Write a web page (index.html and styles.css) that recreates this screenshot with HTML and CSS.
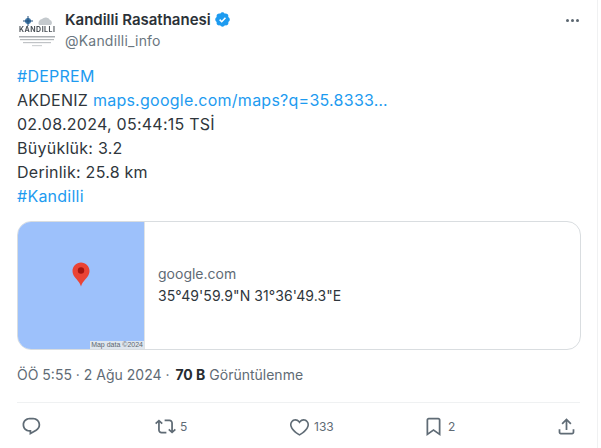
FILE: index.html
```html
<!DOCTYPE html>
<html lang="tr">
<head>
<meta charset="utf-8">
<title>Kandilli Rasathanesi</title>
<link rel="stylesheet" href="styles.css">
</head>
<body>
<main class="tweet">
  <header class="head">
    <div class="avatar">
      <svg width="40" height="40" viewBox="0 0 40 40">
        <circle cx="11" cy="8" r="3" fill="#3f78a8"/>
        <path d="M11 3v10M6 8h10" stroke="#24507c" stroke-width="1"/>
        <path d="M22 12a4 4 0 0 1 3-6 5 5 0 0 1 8 1 3 3 0 0 1 1 5z" fill="#c4c9cd"/>
        <rect x="2" y="23" width="36" height="1.500" fill="#a9adb1"/>
        <rect x="3" y="26" width="34" height="1.200" fill="#b4b8bb"/>
        <rect x="6" y="29" width="28" height="1.200" fill="#c0c3c6"/>
        <rect x="15" y="32" width="10" height="1.200" fill="#cfd2d4"/>
      </svg>
      <span class="avatar-word">KANDILLI</span>
    </div>
    <div class="who">
      <div class="name-row">
        <span class="name">Kandilli Rasathanesi</span>
        <svg class="badge" width="17" height="17" viewBox="0 0 22 22"><path fill="#1d9bf0" d="M20.400 11c0-1.300-.8-2.500-2-3.100.4-1.300.2-2.700-.8-3.600-.9-.9-2.300-1.200-3.600-.8C13.500 2.400 12.300 1.600 11 1.600S8.500 2.400 7.900 3.500c-1.300-.4-2.700-.1-3.600.8s-1.200 2.300-.8 3.600C2.400 8.500 1.600 9.700 1.600 11s.8 2.500 1.900 3.100c-.4 1.300-.1 2.700.8 3.600s2.300 1.200 3.600.8c.6 1.100 1.800 1.900 3.100 1.900s2.500-.8 3.100-1.900c1.300.4 2.700.1 3.600-.8s1.200-2.300.8-3.600c1.200-.6 2-1.800 2-3.100z"/><path fill="none" stroke="#fff" stroke-width="2" d="M7.300 11.200l2.700 2.700 4.800-5.200"/></svg>
      </div>
      <div class="handle">@Kandilli_info</div>
    </div>
    <div class="more"><i></i><i></i><i></i></div>
  </header>

  <div class="text">
    <div><a>#DEPREM</a></div>
    <div>AKDENIZ <a>maps.google.com/maps?q=35.8333…</a></div>
    <div>02.08.2024, 05:44:15 TSİ</div>
    <div>Büyüklük: 3.2</div>
    <div>Derinlik: 25.8 km</div>
    <div><a>#Kandilli</a></div>
  </div>

  <section class="card">
    <div class="map">
      <svg class="pin" width="18" height="25" viewBox="0 0 18 25">
        <path fill="#ea4335" d="M9 0.500C4.300 0.500 0.500 4.300 0.500 9c0 2.200.8 4 2 5.800 2 2.900 5 4.900 6.500 9.700 1.500-4.800 4.500-6.800 6.500-9.700 1.200-1.800 2-3.600 2-5.800C17.500 4.300 13.700 0.500 9 0.500z"/>
        <circle cx="9" cy="8.500" r="3.200" fill="#a5140f"/>
      </svg>
      <span class="map-data">Map data ©2024</span>
    </div>
    <div class="card-info">
      <div class="domain">google.com</div>
      <div class="coords">35°49'59.9"N 31°36'49.3"E</div>
    </div>
  </section>

  <div class="meta">ÖÖ 5:55 · 2 Ağu 2024 · <b>70 B</b> Görüntülenme</div>

  <nav class="actions">
    <span class="act act-reply">
      <svg width="21" height="21" viewBox="0 0 24 24"><path d="M1.750 10c0-4.420 3.580-8 8-8h4.130c4.490 0 8.120 3.640 8.120 8.130 0 2.960-1.600 5.680-4.200 7.100L9.750 21.700v-3.700h-.06C5.270 18.100 1.750 14.500 1.750 10zm8-6c-3.310 0-6 2.690-6 6 0 3.370 2.650 6.060 5.900 6l.35-.01h1.750v2.300l5.100-2.820c1.940-1.070 3.150-3.110 3.150-5.340C20 6.750 17.250 4 13.880 4z"/></svg>
    </span>
    <span class="act act-rt">
      <svg width="21" height="21" viewBox="0 0 24 24"><path d="M4.500 3.880l4.430 4.140-1.360 1.460L5.500 7.550V16c0 1.100.9 2 2 2H13v2H7.500c-2.210 0-4-1.790-4-4V7.550L1.430 9.480.07 8.020 4.500 3.880zM16.500 6H11V4h5.500c2.210 0 4 1.790 4 4v8.450l2.070-1.930 1.360 1.460-4.430 4.140-4.430-4.140 1.360-1.460 2.070 1.930V8c0-1.100-.9-2-2-2z"/></svg>
      <span>5</span>
    </span>
    <span class="act act-like">
      <svg width="21" height="21" viewBox="0 0 24 24"><path d="M16.700 5.500c-1.740-.05-3.380 1-4.360 2.830L12 8.970l-.34-.64C10.680 6.500 9.040 5.450 7.300 5.500c-1.400.04-2.600.6-3.400 1.600-.83 1-1.150 2.440-.8 3.900.8 3.300 4.500 6.700 8.900 9.500 4.400-2.800 8.100-6.200 8.900-9.500.35-1.460.03-2.900-.8-3.900-.8-1-2-1.560-3.400-1.600zM12 22.700l-.5-.3C6.600 19.400 2.300 15.600 1.300 11.400.8 9.400 1.300 7.400 2.500 5.900 3.700 4.500 5.300 3.600 7.250 3.500c1.900-.05 3.600.8 4.750 2.300 1.150-1.500 2.850-2.350 4.750-2.300 1.950.1 3.550 1 4.750 2.400 1.200 1.500 1.700 3.500 1.200 5.500-1 4.200-5.300 8-10.200 11z"/></svg>
      <span>133</span>
    </span>
    <span class="act act-save">
      <svg width="21" height="21" viewBox="0 0 24 24"><path d="M4 4.500C4 3.120 5.120 2 6.500 2h11C18.880 2 20 3.120 20 4.500v18.440l-8-5.710-8 5.710V4.500zM6.500 4c-.28 0-.5.220-.5.500v14.560l6-4.290 6 4.290V4.500c0-.28-.22-.5-.5-.5z"/></svg>
      <span>2</span>
    </span>
    <span class="act act-share">
      <svg width="21" height="21" viewBox="0 0 24 24"><path d="M12 2.590l5.700 5.700-1.410 1.420L13 6.410V16h-2V6.410l-3.300 3.300-1.410-1.420L12 2.590zM21 15l-.02 3.510c0 1.380-1.120 2.490-2.500 2.490H5.500C4.110 21 3 19.880 3 18.500V15h2v3.500c0 .28.220.5.500.5h12.980c.28 0 .5-.22.500-.5L19 15z"/></svg>
    </span>
  </nav>
</main>
</body>
</html>
```
FILE: styles.css
```css
* { box-sizing: border-box; }
html, body { margin: 0; padding: 0; }
body {
  width: 601px;
  height: 448px;
  overflow: hidden;
  background: #fff;
  color: #2a3238;
  font-family: Inter, "Open Sans", sans-serif;
}
.tweet {
  width: 598px;
  height: 448px;
  padding: 0 17px;
  border-right: 1px solid #f0f1f2;
}
.head {
  display: flex;
  align-items: flex-start;
  height: 64px;
  padding-top: 9px;
}
.avatar {
  position: relative;
  width: 40px;
  height: 40px;
  margin-top: 4px;
  flex: none;
  filter: blur(0.6px);
}
.avatar-word {
  position: absolute;
  left: 2px;
  top: 13px;
  font-size: 7px;
  line-height: 8px;
  font-weight: 700;
  color: #4a5157;
  letter-spacing: 0.5px;
}
.who { margin-left: 8px; }
.name-row { display: flex; align-items: center; gap: 3px; height: 20px; }
.name { font-size: 15px; font-weight: 600; color: #2b3137; }
.handle { font-size: 14px; line-height: 20px; margin-top: 2px; color: #6a7680; letter-spacing: 0.2px; }
.badge { display: block; }
.more { margin-left: auto; display: flex; gap: 2px; padding: 10px 1px 0 0; }
.more i { width: 3px; height: 3px; border-radius: 50%; background: #5b6670; }
.text { font-size: 16px; line-height: 24px; letter-spacing: 0.25px; color: #2f363c; }
.text a { color: #1d9bf0; }
.card {
  display: flex;
  height: 129px;
  width: 564px;
  margin-top: 13px;
  border: 1px solid #d9dde0;
  border-radius: 14px;
  overflow: hidden;
}
.map {
  position: relative;
  width: 127px;
  flex: none;
  background: #9dc1fb;
  border-right: 1px solid #dfe3e6;
}
.pin { position: absolute; left: 54px; top: 40px; }
.map-data {
  position: absolute;
  right: 0;
  bottom: 0;
  padding: 0 1px;
  background: #dfe6ee;
  font-family: "Liberation Sans", sans-serif;
  font-size: 7px;
  line-height: 8px;
  color: #5c6670;
}
.card-info { padding: 42px 0 0 13px; font-size: 14px; line-height: 20px; }
.domain { color: #5f6b75; }
.coords { margin-top: 2px; color: #2f363c; letter-spacing: 0.08px; }
.meta {
  height: 53px;
  padding-top: 15px;
  border-bottom: 1px solid #eff1f2;
  font-size: 14px;
  line-height: 20px;
  color: #5f6b75;
}
.meta b { color: #262c31; margin-left: 2px; }
.actions {
  display: flex;
  height: 46px;
  align-items: center;
  font-size: 12px;
  color: #5f6b75;
}
.act { display: flex; align-items: center; gap: 4px; }
.act svg { fill: #5f6b75; display: block; }
.act-reply { width: 134px; margin-left: 4px; }
.act-rt { width: 134px; }
.act-like { width: 134px; }
.act-save { width: 133px; }
```
